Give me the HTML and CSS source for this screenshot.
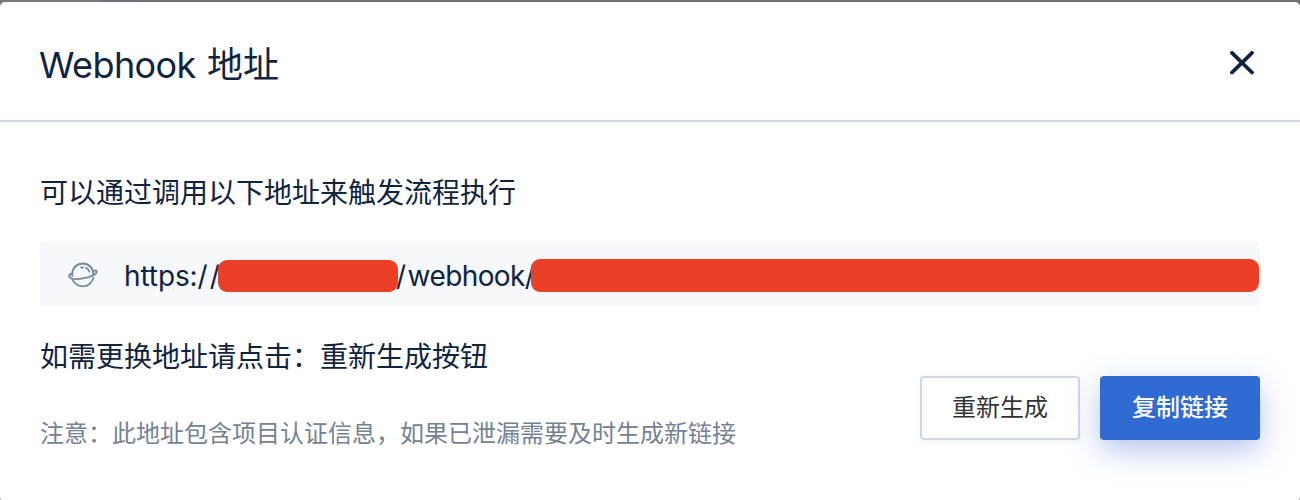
FILE: index.html
```html
<!DOCTYPE html>
<html lang="zh-CN">
<head>
<meta charset="utf-8">
<title>Webhook 地址</title>
<link rel="stylesheet" href="styles.css">
</head>
<body>
<section class="dialog">
  <header class="dialog-header">
    <h1 class="dialog-title"><span class="title-latin">Webhook</span><span>地址</span></h1>
    <button class="close" aria-label="关闭">
      <svg width="24" height="24" viewBox="0 0 24 24" fill="none" stroke="currentColor" stroke-width="3.8" stroke-linecap="round"><path d="M2 1.9L22 21.5M22 1.9L2 21.5"/></svg>
    </button>
  </header>
  <div class="dialog-body">
    <p class="text">可以通过调用以下地址来触发流程执行</p>
    <div class="address">
      <svg class="planet" width="30" height="26" viewBox="0 0 30 26" fill="none" stroke="currentColor" stroke-width="1.8" stroke-linecap="round" stroke-linejoin="round">
        <path d="M4.2 14.2V12C4.2 6 9 1.5 14.8 1.5S25.4 6 25.4 12V13"/>
        <path d="M4 11.6C2 11.8 1 13 1.1 14.1C1.7 17.2 7.7 17.6 15.2 16.4C23 15 28.9 12 28.8 9.6C28.7 8.4 27.5 8.2 25.4 9"/>
        <path d="M4.2 17.2C6.5 21.7 10.4 24.4 14.8 24.4S23.4 21.7 25.4 15.8"/>
        <path d="M13.2 5.5H14.8M18 5.7C20 6.7 21 8 21.4 9.7"/>
      </svg>
      <span class="url-scheme">https:<span class="slashes">//</span></span>
      <span class="mask mask-host"></span>
      <span class="url-path"><span class="lead-slash">/</span>webhook/</span>
      <span class="mask mask-token"></span>
    </div>
    <div class="footer">
      <div class="notes">
        <p class="text">如需更换地址请点击：重新生成按钮</p>
        <p class="hint">注意：此地址包含项目认证信息，如果已泄漏需要及时生成新链接</p>
      </div>
      <div class="actions">
        <button class="btn">重新生成</button>
        <button class="btn btn-primary">复制链接</button>
      </div>
    </div>
  </div>
</section>
</body>
</html>
```
FILE: styles.css
```css
* { box-sizing: border-box; }
body {
  margin: 0;
  height: 500px;
  padding-top: 2px;
  overflow: hidden;
  background: linear-gradient(90deg, #7a7778 102px, #6b7078 102px, #737174 180px);
  font-family: Inter, "Noto Sans CJK SC", sans-serif;
  color: #10233f;
}
h1, p { margin: 0; font-weight: 400; }
button { font-family: inherit; padding: 0; }
.dialog { height: 500px; background: #fff; border-radius: 5px; }
.dialog-header {
  height: 120px;
  padding: 0 40px;
  display: flex;
  justify-content: space-between;
  border-bottom: 2px solid #cdd8ea;
}
.dialog-title {
  display: flex;
  gap: 12px;
  margin: 37px 0 0 -1px;
  font-size: 36px;
  line-height: 52px;
  white-space: nowrap;
}
.title-latin { width: 156px; letter-spacing: -.6px; }
.close {
  display: flex;
  align-self: flex-start;
  margin: 49px 6px 0 0;
  border: 0;
  background: none;
  color: #10233f;
}
.dialog-body { padding: 51px 40px 0; }
.text { font-size: 28px; line-height: 40px; white-space: nowrap; }
.address {
  height: 64px;
  margin-top: 29px;
  padding: 2px 0 0 28px;
  display: flex;
  align-items: center;
  background: #f6f8fc;
  border-radius: 4px;
  font-size: 28px;
  line-height: 40px;
  white-space: nowrap;
}
.planet { margin-right: 26px; color: #7a899b; flex: none; }
.url-scheme { width: 94px; padding-top: 2px; letter-spacing: -.1px; }
.url-path { width: 135px; padding-top: 2px; margin-left: -2px; letter-spacing: -.6px; }
.slashes { letter-spacing: 2px; }
.lead-slash { letter-spacing: 1.5px; }
.mask { flex: none; margin-top: 2px; background: #eb4027; border-radius: 9px; z-index: 1; }
.mask-host { width: 180px; height: 32px; }
.mask-token { width: 728px; height: 33px; margin-top: 1px; }
.footer { display: flex; justify-content: space-between; }
.notes { padding-top: 31px; }
.hint {
  margin-top: 39px;
  font-size: 24px;
  line-height: 36px;
  color: #748294;
  white-space: nowrap;
}
.actions { display: flex; gap: 20px; padding-top: 70px; }
.btn {
  width: 160px;
  height: 64px;
  border: 2px solid #cdd8ec;
  border-radius: 4px;
  background: #fff;
  color: #333;
  font-size: 24px;
  line-height: 36px;
  box-shadow: 0 2px 8px rgba(0, 0, 0, .06);
}
.btn-primary {
  border: 0;
  background: #306bd3;
  color: #fff;
  font-weight: 500;
  box-shadow: 0 10px 30px rgba(48, 88, 200, .36);
}
```
